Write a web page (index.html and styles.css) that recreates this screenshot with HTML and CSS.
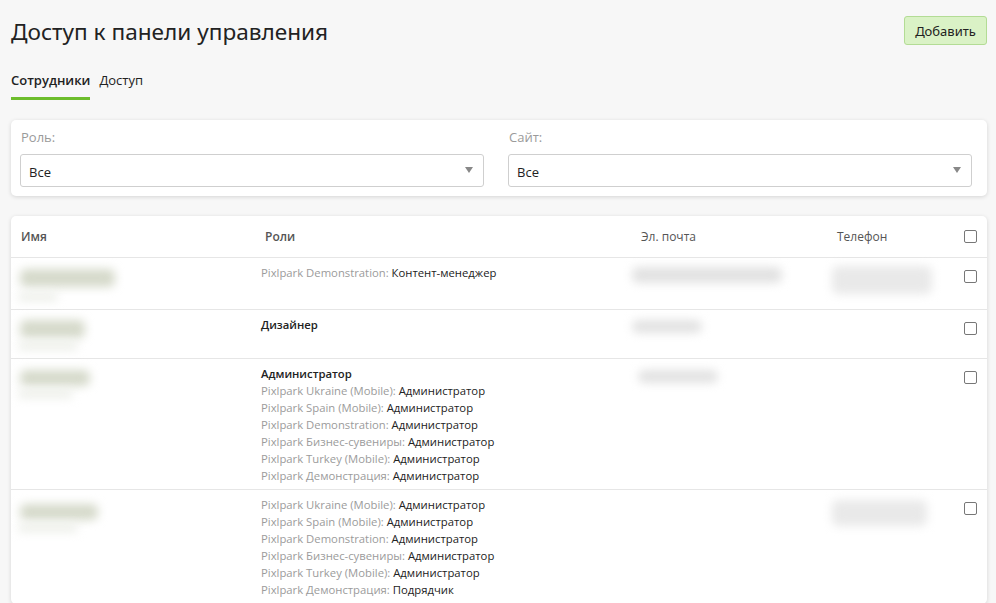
FILE: index.html
```html
<!DOCTYPE html>
<html lang="ru">
<head>
<meta charset="utf-8">
<title>Доступ к панели управления</title>
<link rel="stylesheet" href="styles.css">
</head>
<body>
<div class="page">
  <header class="top">
    <h1 class="title">Доступ к панели управления</h1>
    <button class="btn-add">Добавить</button>
  </header>
  <nav class="tabs">
    <a class="tab active">Сотрудники</a>
    <a class="tab">Доступ</a>
  </nav>

  <section class="card filters">
    <div class="filter">
      <label class="flabel">Роль:</label>
      <div class="select"><span>Все</span><i class="caret"></i></div>
    </div>
    <div class="filter">
      <label class="flabel">Сайт:</label>
      <div class="select"><span>Все</span><i class="caret"></i></div>
    </div>
  </section>

  <section class="card tablecard">
    <table class="users">
      <colgroup>
        <col class="c-name"><col class="c-roles"><col class="c-mail"><col class="c-phone"><col class="c-check">
      </colgroup>
      <thead>
        <tr>
          <th class="h-name">Имя</th>
          <th class="h-roles">Роли</th>
          <th class="h-mail">Эл. почта</th>
          <th class="h-phone">Телефон</th>
          <th class="h-check"><span class="cb"></span></th>
        </tr>
      </thead>
      <tbody>
        <tr>
          <td><div class="blur name n1"></div><div class="blur sub s1"></div></td>
          <td><div class="role"><span class="site">Pixlpark Demonstration:</span> Контент-менеджер</div></td>
          <td><div class="blur mail m1"></div></td>
          <td><div class="blur phone p1"></div></td>
          <td class="chk"><span class="cb"></span></td>
        </tr>
        <tr>
          <td><div class="blur name n2"></div><div class="blur sub s2"></div></td>
          <td><div class="role main">Дизайнер</div></td>
          <td><div class="blur mail m2"></div></td>
          <td></td>
          <td class="chk"><span class="cb"></span></td>
        </tr>
        <tr>
          <td><div class="blur name n3"></div><div class="blur sub s3"></div></td>
          <td>
            <div class="role main">Администратор</div>
            <div class="role"><span class="site">Pixlpark Ukraine (Mobile):</span> Администратор</div>
            <div class="role"><span class="site">Pixlpark Spain (Mobile):</span> Администратор</div>
            <div class="role"><span class="site">Pixlpark Demonstration:</span> Администратор</div>
            <div class="role"><span class="site">Pixlpark Бизнес-сувениры:</span> Администратор</div>
            <div class="role"><span class="site">Pixlpark Turkey (Mobile):</span> Администратор</div>
            <div class="role"><span class="site">Pixlpark Демонстрация:</span> Администратор</div>
          </td>
          <td><div class="blur mail m3"></div></td>
          <td></td>
          <td class="chk"><span class="cb"></span></td>
        </tr>
        <tr>
          <td><div class="blur name n4"></div><div class="blur sub s4"></div></td>
          <td>
            <div class="role"><span class="site">Pixlpark Ukraine (Mobile):</span> Администратор</div>
            <div class="role"><span class="site">Pixlpark Spain (Mobile):</span> Администратор</div>
            <div class="role"><span class="site">Pixlpark Demonstration:</span> Администратор</div>
            <div class="role"><span class="site">Pixlpark Бизнес-сувениры:</span> Администратор</div>
            <div class="role"><span class="site">Pixlpark Turkey (Mobile):</span> Администратор</div>
            <div class="role"><span class="site">Pixlpark Демонстрация:</span> Подрядчик</div>
          </td>
          <td></td>
          <td><div class="blur phone p4"></div></td>
          <td class="chk"><span class="cb"></span></td>
        </tr>
      </tbody>
    </table>
  </section>
</div>
</body>
</html>
```

FILE: styles.css
```css
* { box-sizing: border-box; }
html, body { margin: 0; padding: 0; }
body {
  background: #f7f7f7;
  font-family: "Open Sans", "Noto Sans", sans-serif;
  color: #333;
  overflow: hidden;
}
.page { padding: 0 9px 0 11px; }

.top {
  display: flex;
  justify-content: space-between;
  align-items: flex-start;
  padding-top: 16px;
  height: 64px;
}
.title {
  margin: 1px 0 0 0;
  font-family: "Noto Sans", "Open Sans", sans-serif;
  font-weight: 400;
  font-size: 22.6px;
  line-height: 30px;
  color: #222;
}
.btn-add {
  font-family: "Noto Sans", "Open Sans", sans-serif;
  font-size: 13px;
  color: #222;
  background: #daf2c6;
  border: 1px solid #b3dc95;
  border-radius: 3px;
  width: 83px;
  height: 29px;
  padding: 0;
}

.tabs {
  display: flex;
  gap: 9px;
  height: 36px;
}
.tab {
  font-size: 13px;
  line-height: 18px;
  color: #222;
  padding-top: 7px;
  border-bottom: 3px solid transparent;
  height: 36px;
}
.tab.active {
  font-weight: 600;
  border-bottom-color: #6dbd2c;
}

.card {
  background: #fff;
  border-radius: 5px;
  box-shadow: 0 1px 4px rgba(0,0,0,0.14);
}
.filters {
  margin-top: 20px;
  display: grid;
  grid-template-columns: 1fr 1fr;
  gap: 24px;
  padding: 8px 15px 10px 9px;
  height: 76px;
}
.flabel {
  display: block;
  font-size: 13px;
  color: #9a9a9a;
  line-height: 18px;
  padding-left: 1px;
  margin-bottom: 8px;
}
.select {
  position: relative;
  height: 33px;
  border: 1px solid #cfcfcf;
  border-radius: 3px;
  font-size: 13px;
  color: #222;
  padding: 8px 8px 0 8px;
  line-height: 18px;
}
.caret {
  position: absolute;
  right: 10px;
  top: 12px;
  width: 0; height: 0;
  border-left: 4px solid transparent;
  border-right: 4px solid transparent;
  border-top: 6px solid #888;
}

.tablecard {
  margin-top: 20px;
  overflow: hidden;
}
.users {
  width: 100%;
  border-collapse: collapse;
  table-layout: fixed;
  font-size: 12px;
}
.c-name { width: 240px; }
.c-roles { width: 365px; }
.c-mail { width: 202px; }
.c-phone { width: 135px; }
.c-check { width: 34px; }

.users th {
  height: 41px;
  text-align: left;
  font-size: 12px;
  font-weight: 400;
  color: #555;
  padding: 0 0 0 10px;
  border-bottom: 1px solid #e6e6e6;
  vertical-align: middle;
}
.users th.h-name, .users th.h-roles { font-weight: 600; }
.users th.h-roles { padding-left: 14px; }
.users th.h-mail { padding-left: 25px; }
.users th.h-phone { padding-left: 19px; }
.users th.h-check { padding-left: 11px; }

.users td {
  vertical-align: top;
  padding: 6px 0 5px 10px;
  border-bottom: 1px solid #e6e6e6;
}
.users td:first-child { padding-left: 3px; }
.users td.chk { padding-left: 11px; padding-top: 12px; }

.cb {
  display: block;
  width: 13px;
  height: 13px;
  border: 1px solid #777;
  border-radius: 2px;
  background: #fff;
}

.role {
  font-size: 11.3px;
  line-height: 17px;
  color: #222;
  white-space: nowrap;
}
.role.main { font-weight: 600; }
.site { color: #9b9b9b; }

.blur { filter: blur(5px); border-radius: 6px; }
.name { background: #d6dacb; }
.sub { background: #eceee8; }
.n1 { width: 95px; height: 18px; margin: 5px 0 0 6px; }
.s1 { width: 40px; height: 8px; margin: 6px 0 3px 4px; }
.n2 { width: 65px; height: 18px; margin: 4px 0 0 6px; }
.s2 { width: 60px; height: 8px; margin: 4px 0 3px 4px; }
.n3 { width: 70px; height: 16px; margin: 5px 0 0 6px; }
.s3 { width: 55px; height: 8px; margin: 4px 0 0 4px; }
.n4 { width: 78px; height: 16px; margin: 8px 0 0 6px; }
.s4 { width: 60px; height: 8px; margin: 4px 0 0 4px; }
.mail { background: #e2e2e2; }
.m1 { width: 150px; height: 16px; margin: 3px 0 0 6px; }
.m2 { width: 70px; height: 13px; margin: 4px 0 0 6px; }
.m3 { width: 80px; height: 13px; margin: 5px 0 0 12px; }
.phone { background: #e9e9e9; }
.p1 { width: 100px; height: 28px; margin: 2px 0 0 4px; }
.p4 { width: 95px; height: 26px; margin: 4px 0 0 4px; }
```
